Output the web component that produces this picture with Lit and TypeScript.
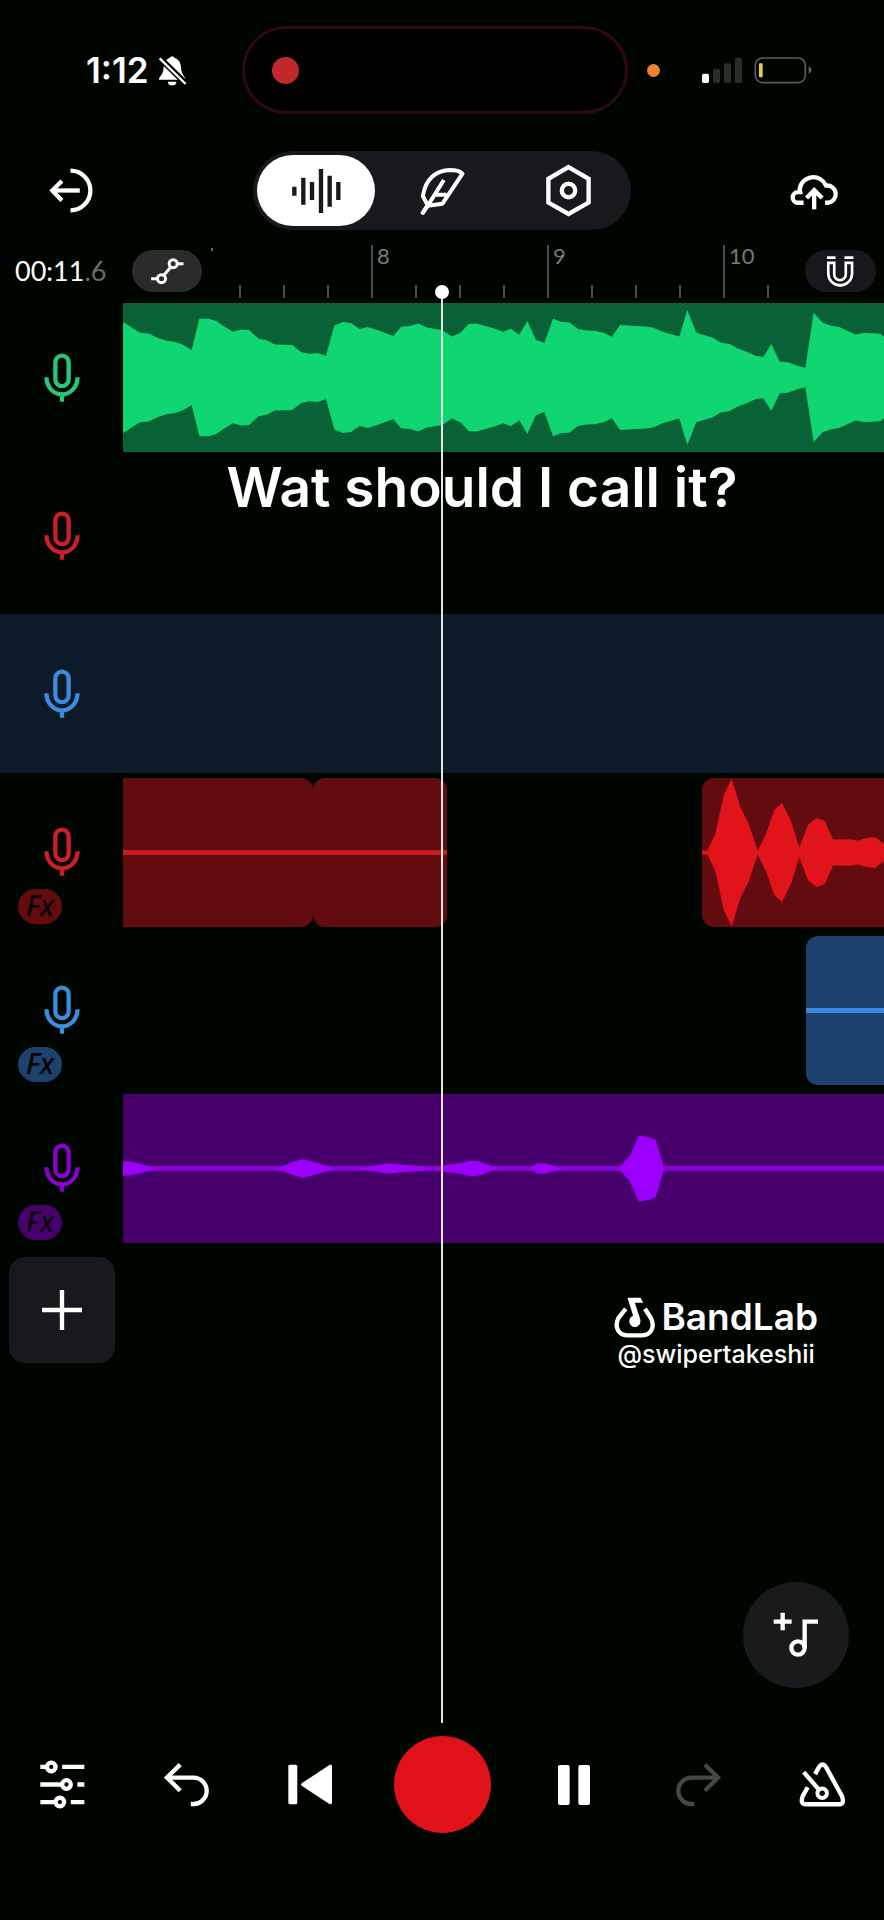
import { LitElement, html, css, svg, nothing } from "lit";
import type { TemplateResult } from "lit";
import { customElement, property, state } from "lit/decorators.js";
import { classMap } from "lit/directives/class-map.js";
import { styleMap } from "lit/directives/style-map.js";

/** Half-heights of a waveform: [x, half-height], both in thirds of a pixel. */
type Envelope = Array<[number, number]>;

interface Clip {
  /** Space between this clip and the one before it. */
  gap: number;
  /** Width of the clip; null runs on past the right edge. */
  width: number | null;
  cut: "none" | "start" | "end" | "both";
  line: boolean;
  wave?: Envelope;
}

interface Track {
  name: string;
  color: string;
  fx: boolean;
  clips: Clip[];
}

const BEAT_LOOP: Envelope = [
  [0, 166], [51, 134], [78, 132], [105, 118], [131, 110], [156, 106], [179, 99], [206, 82],
  [229, 176], [257, 176], [280, 169], [305, 152], [330, 137], [354, 144], [378, 142], [407, 116],
  [429, 112], [456, 99], [508, 97], [534, 76], [559, 71], [582, 73], [609, 65], [634, 156],
  [659, 166], [684, 163], [710, 145], [734, 151], [761, 143], [811, 124], [834, 152], [861, 154],
  [886, 162], [911, 150], [957, 142], [987, 123], [1012, 134], [1038, 161], [1064, 161], [1087, 154],
  [1114, 147], [1141, 137], [1163, 146], [1189, 128], [1213, 169], [1239, 113], [1264, 103], [1290, 176],
  [1313, 167], [1340, 165], [1365, 145], [1390, 141], [1415, 140], [1444, 133], [1467, 122], [1491, 157],
  [1569, 153], [1592, 149], [1619, 137], [1669, 123], [1693, 202], [1720, 134], [1770, 119], [1793, 105],
  [1820, 100], [1846, 86], [1869, 78], [1897, 65], [1921, 61], [1945, 100], [1970, 48], [1997, 45],
  [2023, 35], [2047, 29], [2072, 194], [2099, 164], [2122, 156], [2149, 151], [2197, 129], [2225, 134],
  [2272, 131], [2283, 122],
];

const AD_LIB: Envelope = [
  [0, 6], [16, 6], [40, 56], [65, 171], [89, 221], [115, 136], [141, 84], [167, 6],
  [193, 58], [216, 126], [240, 149], [268, 91], [292, 14], [318, 83], [344, 103], [368, 95],
  [393, 39], [443, 40], [469, 36], [495, 44], [521, 46], [539, 30], [546, 28],
];

const HUM: Envelope = [
  [0, 22], [21, 21], [60, 12], [100, 0], [460, 0], [511, 20], [539, 28], [571, 20],
  [640, 0], [700, 0], [791, 15], [880, 8], [930, 0], [957, 9], [1011, 16], [1047, 24],
  [1071, 20], [1125, 0], [1220, 0], [1241, 15], [1266, 16], [1320, 0], [1485, 0], [1521, 38],
  [1547, 98], [1576, 95], [1598, 85], [1624, 0], [2283, 0],
];

const TRACKS: Track[] = [
  { name: "Voice 1", color: "green", fx: false, clips: [{ gap: 0, width: null, cut: "both", line: false, wave: BEAT_LOOP }] },
  { name: "Voice 2", color: "red", fx: false, clips: [] },
  { name: "Voice 3", color: "blue", fx: false, clips: [] },
  {
    name: "Voice 4",
    color: "red",
    fx: true,
    clips: [
      { gap: 0, width: 190, cut: "start", line: true },
      { gap: 0, width: 134, cut: "none", line: true },
      { gap: 255, width: null, cut: "end", line: false, wave: AD_LIB },
    ],
  },
  { name: "Voice 5", color: "blue", fx: true, clips: [{ gap: 683, width: null, cut: "end", line: true }] },
  { name: "Voice 6", color: "purple", fx: true, clips: [{ gap: 0, width: null, cut: "both", line: true, wave: HUM }] },
];

const BARS = [
  { label: "", beats: 4 },
  { label: "8", beats: 4 },
  { label: "9", beats: 4 },
  { label: "10", beats: 2 },
];

const icon = (box: string, w: number, h: number, body: unknown): TemplateResult =>
  html`<svg viewBox=${box} width=${w} height=${h} fill="none" stroke="currentColor" stroke-width="13" aria-hidden="true">${body}</svg>`;

const bend = svg`<path d="M498 234H580A40 40 0 0 1 580 314H572"/><path d="M540 195L500 234L540 274"/>`;

const ICONS = {
  bell: icon("474 166 88 94", 29, 31, svg`
    <path fill="currentColor" stroke="none" d="M477 241C477 230 490 228 491 205C492 188 499 178 509 175Q517 164 525 175C538 179 543 190 544 205C545 228 557 230 557 241Z"/>
    <path fill="currentColor" stroke="none" d="M504 247H530A13 11 0 0 1 504 247Z"/>
    <path stroke="#000500" stroke-width="18" d="M478 174L562 256"/>
    <path stroke-width="7" d="M479 176L558 254"/>`),
  exit: icon("147 503 134 136", 45, 45, svg`
    <path d="M211 511A60 60 0 0 1 211 631"/><path d="M239 571H156"/><path d="M185 542L156 571L185 601"/>`),
  wave: icon("875 505 147 132", 49, 44, svg`
    <path d="M882 558V585M909 531V612M935 544V598M962 505V637M988 525V618M1014 544V598"/>`),
  feather: icon("56 70 140 150", 47, 50, svg`
    <path stroke-width="12" stroke-linejoin="round" d="M82 189L67 160Q80 84 150 82Q174 82 186 93L126 183Z"/>
    <path stroke-width="13" stroke-linecap="round" d="M67 210L82 188"/><path stroke-width="12" d="M82 189L130 112M106 156H138"/>`),
  hexagon: icon("312 492 134 158", 45, 53, svg`
    <path d="M379 501L439 536V607L379 641L319 607V536Z"/><circle cx="379" cy="571" r="20"/>`),
  cloud: icon("1040 508 152 118", 51, 39, svg`
    <path d="M1083 604H1066A16 16 0 0 1 1066 572H1073L1071 562A42 42 0 0 1 1151 552A26 26 0 0 1 1157 604H1148"/>
    <path d="M1115 624V568"/><path d="M1092 590L1115 566L1139 590"/>`),
  automation: icon("450 83 104 84", 35, 28, svg`
    <g stroke-width="9"><circle cx="484" cy="148" r="12"/><circle cx="519" cy="103" r="12"/>
    <path d="M453 148H472M531 103H550M491 138L512 113"/></g>`),
  magnet: icon("1150 78 92 100", 31, 33, svg`
    <g stroke-width="8"><path d="M1155 86H1181M1208 86H1235"/>
    <path d="M1159 102H1177V137A17 17 0 0 0 1212 137V102H1231V134A36 36 0 0 1 1159 134Z"/></g>`),
  mic: icon("131 368 108 148", 36, 49, svg`
    <rect x="165" y="376" width="40" height="92" rx="20"/>
    <path d="M138 441A47 52 0 0 0 232 441M185 492V515"/>`),
  plus: icon("125 630 120 120", 40, 40, svg`<path d="M185 630V750M125 690H245"/>`),
  note: icon("994 127 138 138", 46, 46, svg`
    <path d="M1023 129V182M996 156H1050M1089 235V156H1129"/><circle cx="1069" cy="235" r="20"/>`),
  logo: icon("506 650 122 122", 41, 41, svg`
    <path d="M541 685L519 713C505 742 522 764 545 764H590C613 764 630 742 616 713L598 685"/>
    <path fill="currentColor" stroke="none" d="M546 652H585L593 667H568L584 716A17 17 0 1 1 563 706Z"/>`),
  sliders: icon("118 180 136 148", 45, 49, svg`
    <path d="M119 201H141M185 201H252M119 254H186M231 254H252M119 307H166M211 307H252"/>
    <circle cx="152" cy="201" r="13"/><circle cx="198" cy="254" r="13"/><circle cx="178" cy="307" r="13"/>`),
  undo: icon("488 187 142 136", 47, 45, bend),
  redo: icon("-630 187 142 136", 47, 45, svg`<g transform="scale(-1 1)">${bend}</g>`),
  restart: icon("864 193 134 124", 45, 41, svg`
    <rect x="864" y="195" width="27" height="120" rx="5" fill="currentColor" stroke="none"/>
    <path fill="currentColor" stroke-width="10" stroke-linejoin="round" d="M908 255L991 200V310Z"/>`),
  pause: icon("348 585 96 120", 32, 40, svg`
    <rect x="348" y="585" width="35" height="120" rx="6" fill="currentColor" stroke="none"/>
    <rect x="409" y="585" width="35" height="120" rx="6" fill="currentColor" stroke="none"/>`),
  metronome: icon("1072 578 140 134", 47, 45, svg`
    <path d="M1120 614L1131 594Q1142 577 1153 594L1200 680Q1209 704 1190 704H1094Q1074 704 1083 680L1098 653"/>
    <circle cx="1141" cy="671" r="14" stroke-width="12"/><path d="M1132 661L1086 608"/>`),
  signal: icon("780 172 330 81", 110, 27, svg`
    <g stroke="none"><rect x="780" y="222" width="21" height="28" rx="5" fill="#fff"/>
    <g fill="#2a2d2a"><rect x="813" y="207" width="21" height="43" rx="5"/><rect x="846" y="191" width="21" height="59" rx="5"/>
    <rect x="879" y="174" width="21" height="76" rx="5"/></g>
    <rect x="951" y="191" width="11" height="42" rx="3" fill="#e6d040"/>
    <path fill="#5c5f5b" d="M1100 200Q1109 205 1109 211T1100 223Z"/></g>
    <rect x="940" y="175" width="150" height="74" rx="22" stroke="#5c5f5b" stroke-width="5"/>`),
};

@customElement("clip-region")
export class ClipRegion extends LitElement {
  @property({ attribute: false }) clip!: Clip;

  static styles = css`
    :host {
      display: grid;
      align-items: center;
      overflow: hidden;
      background: var(--clip);
    }
    .line,
    .wave {
      grid-area: 1 / 1;
    }
    .line {
      height: 5px;
      background: var(--line);
    }
    .wave {
      display: block;
      fill: var(--wave);
    }
  `;

  render() {
    const { line, wave } = this.clip;
    return html`
      ${line ? html`<div class="line"></div>` : nothing}
      ${wave ? this.renderWave(wave) : nothing}
    `;
  }

  private renderWave(wave: Envelope) {
    const upper = wave.map(([x, a]) => `${x},${-a}`);
    const lower = wave.map(([x, a]) => `${x},${a}`).reverse();
    const width = wave[wave.length - 1][0];
    return html`<svg class="wave" viewBox="0 -223 ${width} 446" width="100%" height="149" preserveAspectRatio="none" aria-hidden="true">
      <polygon points=${[...upper, ...lower].join(" ")}></polygon>
    </svg>`;
  }
}

@customElement("track-row")
export class TrackRow extends LitElement {
  @property({ attribute: false }) track!: Track;
  @property({ type: Boolean, reflect: true }) selected = false;

  static styles = css`
    :host {
      display: grid;
      grid-template-columns: 123px minmax(0, 1fr);
    }
    :host([selected]) {
      background: #0d1a28;
    }
    .green { --mic: #26c877; --clip: #086236; --line: #10d672; --wave: #10d672; }
    .red { --mic: #cb2026; --clip: #620c0f; --line: #c81c20; --wave: #e1131b; }
    .blue { --mic: #3c8bdd; --clip: #1c426d; --line: #398ade; --wave: #398ade; }
    .purple { --mic: #8900cf; --clip: #48006d; --line: #8900d3; --wave: #9a00fb; }
    .head {
      position: relative;
      display: grid;
      place-items: center;
      border: 0;
      padding: 0;
      background: none;
      color: var(--mic);
    }
    .head svg {
      display: block;
    }
    .fx {
      position: absolute;
      left: 18px;
      bottom: 7px;
      width: 44px;
      height: 35px;
      border-radius: 18px;
      background: var(--clip);
      color: #080305;
      font: italic 500 28px/33px "Noto Sans", sans-serif;
      text-align: center;
    }
    .lane {
      display: flex;
      padding: 5px 0 4px;
    }
    clip-region {
      flex: none;
      border-radius: 12px;
    }
    .open { flex: 1 1 0; }
    .start { border-radius: 0 12px 12px 0; }
    .end { border-radius: 12px 0 0 12px; }
    .both { border-radius: 0; }
  `;

  render() {
    const { name, color, fx, clips } = this.track;
    return html`
      <button class="head ${color}" aria-label=${name}>
        ${ICONS.mic}${fx ? html`<span class="fx">Fx</span>` : nothing}
      </button>
      <div class="lane ${color}">
        ${clips.map((clip) => html`<clip-region
          class=${classMap({ open: clip.width === null, [clip.cut]: true })}
          style=${styleMap({ marginLeft: `${clip.gap}px`, width: clip.width === null ? undefined : `${clip.width}px` })}
          .clip=${clip}
        ></clip-region>`)}
      </div>
    `;
  }
}

@customElement("app-root")
export class AppRoot extends LitElement {
  @state() private view = 0;
  @state() private selected = 2;

  static styles = css`
    :host {
      display: flex;
      flex-direction: column;
      min-height: 100vh;
      background: #000500;
      color: #fff;
      font-family: Lato, sans-serif;
    }
    svg {
      display: block;
    }
    button {
      display: grid;
      place-items: center;
      border: 0;
      padding: 0;
      background: none;
      color: inherit;
      font: inherit;
    }
    .status {
      display: grid;
      grid-template-columns: 242px 1fr 256px;
      padding: 26px 0 37px;
    }
    .clock {
      display: flex;
      align-items: center;
      gap: 9px;
      padding-left: 86px;
      font: 600 35px/40px Inter, sans-serif;
    }
    .island {
      box-sizing: border-box;
      display: flex;
      align-items: center;
      height: 88px;
      padding-left: 27px;
      border: 3px solid #2f0a12;
      border-radius: 44px;
      background: #000;
    }
    .recording {
      width: 27px;
      height: 27px;
      border-radius: 50%;
      background: #c2272b;
    }
    .radio {
      display: flex;
      align-items: center;
      gap: 42px;
      padding-left: 19px;
    }
    .in-use {
      width: 13px;
      height: 13px;
      border-radius: 50%;
      background: #ee812f;
    }
    .top {
      display: grid;
      grid-template-columns: 1fr auto 1fr;
      align-items: center;
    }
    .exit {
      justify-self: start;
      margin-left: 49px;
    }
    .publish {
      justify-self: end;
      margin-right: 44px;
    }
    .views {
      display: grid;
      grid-template-columns: repeat(3, 126px);
      border-radius: 40px;
      background: #18191c;
    }
    .view {
      height: 71px;
      margin: 4px;
      border-radius: 36px;
    }
    .view.on {
      background: #fff;
      color: #18191c;
    }
    .stage {
      position: relative;
      flex: 1;
    }
    .ruler {
      display: grid;
      grid-template: 68px / 132px 70px 1fr 71px 8px;
    }
    .time {
      grid-area: 1 / 1;
      padding: 25px 0 0 15px;
      font-size: 27px;
      line-height: 32px;
    }
    .tenths {
      color: #6a6c6a;
    }
    .bars {
      grid-area: 1 / 1 / 2 / -1;
      display: flex;
      padding: 15px 0 0 195px;
      overflow: hidden;
    }
    .bar {
      flex: none;
      display: grid;
      grid-template-columns: repeat(4, 44px);
      align-items: end;
    }
    .beat {
      box-sizing: border-box;
      height: 13px;
      border-left: 2px solid #4b4e50;
    }
    .beat.first {
      height: 53px;
      padding-left: 4px;
      color: #77797c;
      font-size: 22px;
      line-height: 22px;
    }
    .beat.hidden {
      border-color: transparent;
    }
    .speck {
      display: block;
      width: 2px;
      height: 3px;
      margin: 3px 0 0 10px;
      background: #606262;
    }
    .chip {
      grid-row: 1;
      height: 42px;
      margin-top: 20px;
      border-radius: 21px;
    }
    .automation {
      grid-column: 2;
      background: #2b2b2c;
    }
    .snap {
      grid-column: 4;
      background: #18181c;
    }
    .tracks {
      display: grid;
      grid-auto-rows: 1fr;
      min-height: 949px;
    }
    .caption {
      position: absolute;
      top: 221px;
      left: 80px;
      right: 0;
      text-align: center;
      margin: 0;
      font: 600 55px/72px Inter, sans-serif;
    }
    .after {
      display: flex;
      justify-content: space-between;
      padding: 10px 66px 0 9px;
    }
    .add {
      width: 106px;
      height: 106px;
      border-radius: 16px;
      background: #18191c;
    }
    .credit {
      padding-top: 39px;
      text-align: center;
    }
    .brand {
      display: flex;
      align-items: center;
      gap: 6px;
      font: 600 37px/42px Inter, sans-serif;
    }
    .user {
      font: 500 25px/32px Inter, sans-serif;
    }
    .playhead {
      position: absolute;
      top: 62px;
      bottom: 0;
      left: calc(50% - 1px);
      width: 2px;
      background: #e4e8e4;
    }
    .knob {
      position: absolute;
      top: -7px;
      left: -6px;
      width: 14px;
      height: 14px;
      border-radius: 50%;
      background: #fff;
    }
    .fab {
      position: absolute;
      right: 35px;
      bottom: 35px;
      width: 106px;
      height: 106px;
      border-radius: 50%;
      background: #181a1b;
    }
    .transport {
      display: grid;
      grid-template-columns: repeat(3, 1fr) 140px repeat(3, 1fr);
      align-items: center;
      justify-items: center;
      padding: 13px 0 87px;
    }
    .transport button:disabled {
      color: #444744;
    }
    .record {
      width: 97px;
      height: 97px;
      border-radius: 50%;
      background: #df121a;
    }
  `;

  render() {
    const views: Array<[string, TemplateResult]> = [
      ["Tracks", ICONS.wave],
      ["Lyrics", ICONS.feather],
      ["Settings", ICONS.hexagon],
    ];
    return html`
      <div class="status">
        <div class="clock"><span>1:12</span>${ICONS.bell}</div>
        <div class="island"><div class="recording"></div></div>
        <div class="radio"><div class="in-use"></div>${ICONS.signal}</div>
      </div>
      <header class="top">
        <button class="exit" aria-label="Exit">${ICONS.exit}</button>
        <nav class="views">
          ${views.map(([name, glyph], i) => html`<button
            class=${classMap({ view: true, on: i === this.view })}
            aria-label=${name}
            @click=${() => (this.view = i)}
          >${glyph}</button>`)}
        </nav>
        <button class="publish" aria-label="Publish">${ICONS.cloud}</button>
      </header>
      <main class="stage">
        <div class="ruler">
          <div class="bars">
            ${BARS.map(({ label, beats }) => html`<div class="bar">
              ${[0, 1, 2, 3].map((beat) => html`<div
                class=${classMap({ beat: true, first: beat === 0, hidden: beat >= beats || (beat === 0 && !label) })}
              >${beat > 0 ? nothing : label || html`<span class="speck"></span>`}</div>`)}
            </div>`)}
          </div>
          <div class="time">00:11<span class="tenths">.6</span></div>
          <button class="chip automation" aria-label="Automation">${ICONS.automation}</button>
          <button class="chip snap" aria-label="Snap to grid">${ICONS.magnet}</button>
        </div>
        <div class="tracks">
          ${TRACKS.map((track, i) => html`<track-row
            .track=${track}
            ?selected=${i === this.selected}
            @click=${() => (this.selected = i)}
          ></track-row>`)}
        </div>
        <div class="after">
          <button class="add" aria-label="Add track">${ICONS.plus}</button>
          <div class="credit">
            <div class="brand">${ICONS.logo}<span>BandLab</span></div>
            <div class="user">@swipertakeshii</div>
          </div>
        </div>
        <p class="caption">Wat should I call it?</p>
        <div class="playhead"><div class="knob"></div></div>
        <button class="fab" aria-label="Add sound">${ICONS.note}</button>
      </main>
      <footer class="transport">
        <button aria-label="Mixer">${ICONS.sliders}</button>
        <button aria-label="Undo">${ICONS.undo}</button>
        <button aria-label="Back to start">${ICONS.restart}</button>
        <button class="record" aria-label="Record"></button>
        <button aria-label="Pause">${ICONS.pause}</button>
        <button aria-label="Redo" disabled>${ICONS.redo}</button>
        <button aria-label="Metronome">${ICONS.metronome}</button>
      </footer>
    `;
  }
}
